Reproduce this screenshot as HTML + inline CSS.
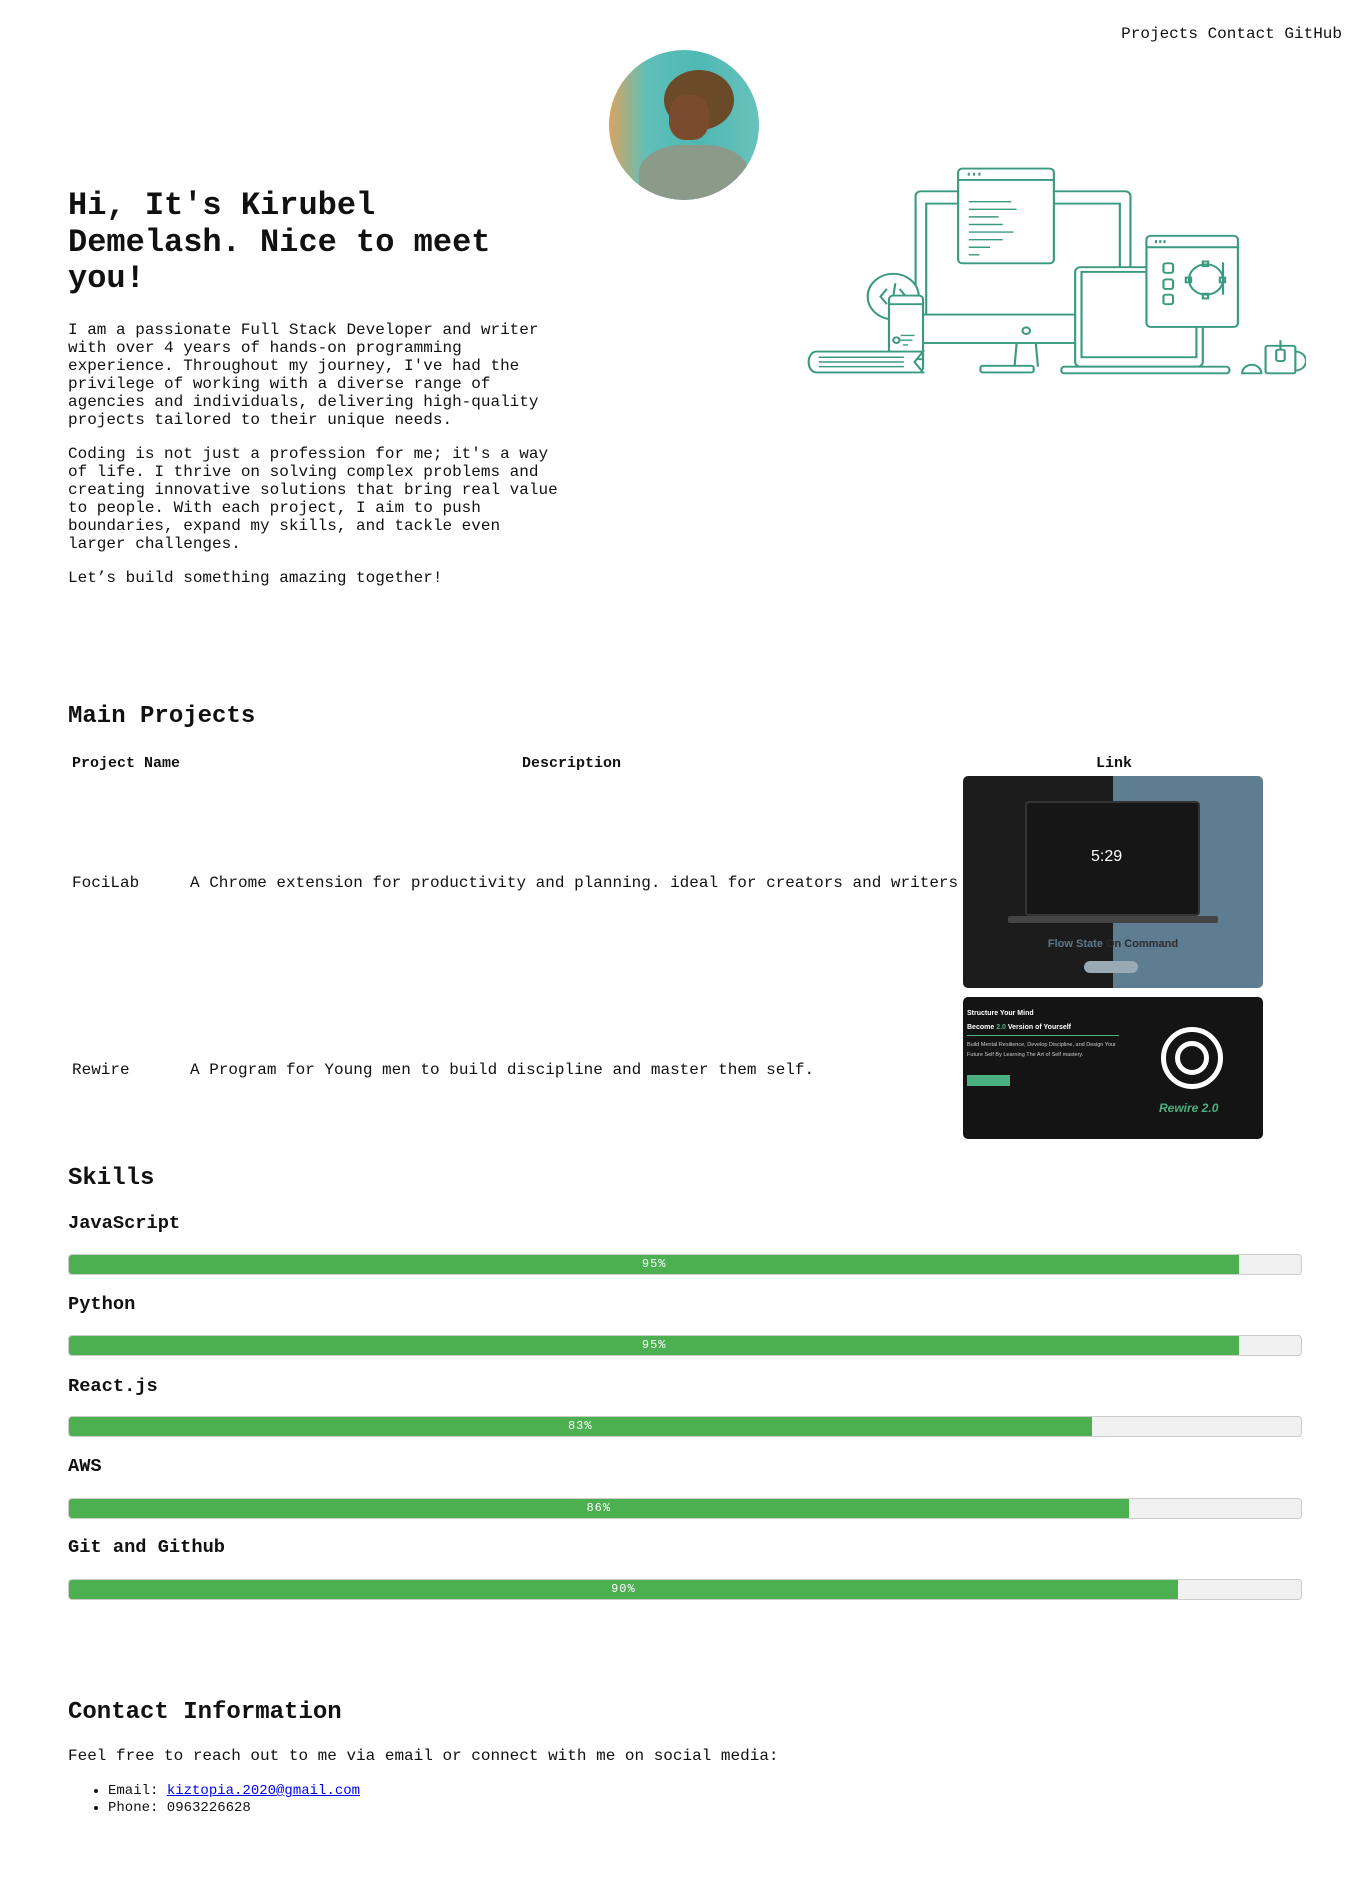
<!DOCTYPE html>
<html><head><meta charset="utf-8"><style>
*{box-sizing:border-box}
body{margin:0;width:1366px;height:1904px;position:relative;font-family:"Liberation Mono","Courier New",monospace;color:#111;background:#fff;overflow:hidden}
.a{position:absolute;margin:0}
p{font-size:16px;line-height:18px;margin:0}
h1{font-size:32px;line-height:36.5px;font-weight:bold}
h2{font-size:24px;font-weight:bold;line-height:28px}
h3{font-size:18.7px;font-weight:bold;line-height:22px}
.bar{position:absolute;left:68px;width:1234px;height:21px;background:#f1f1f1;border:1px solid #ccc;border-radius:4px;overflow:hidden}
.fill{height:100%;background:#4caf50;color:#fff;font-size:12px;line-height:19px;text-align:center;letter-spacing:1px}
.t{font-size:16px;position:absolute;white-space:nowrap}
</style></head><body>
<div class="a t" style="right:24px;top:25px">Projects Contact GitHub</div>

<div class="a" style="left:609px;top:50px;width:150px;height:150px;border-radius:50%;overflow:hidden;background:linear-gradient(90deg,#d9a35e 0%,#5fbfb8 25%,#4fb8b3 60%,#68c2bb 100%)">
<div style="position:absolute;left:55px;top:20px;width:70px;height:60px;border-radius:50%;background:#6b4a2a"></div>
<div style="position:absolute;left:60px;top:45px;width:40px;height:45px;border-radius:40%;background:#7a4b2c"></div>
<div style="position:absolute;left:30px;top:95px;width:110px;height:70px;border-radius:40% 40% 0 0;background:#8c9a8a"></div>
</div>

<h1 class="a" style="left:68px;top:188px;width:495px">Hi, It's Kirubel Demelash. Nice to meet you!</h1>
<div class="a" style="left:68px;top:321px;width:494px">
<p>I am a passionate Full Stack Developer and writer with over 4 years of hands-on programming experience. Throughout my journey, I've had the privilege of working with a diverse range of agencies and individuals, delivering high-quality projects tailored to their unique needs.</p>
<p style="margin-top:16px">Coding is not just a profession for me; it's a way of life. I thrive on solving complex problems and creating innovative solutions that bring real value to people. With each project, I aim to push boundaries, expand my skills, and tackle even larger challenges.</p>
<p style="margin-top:16px">Let’s build something amazing together!</p>
</div>

<svg class="a" style="left:806px;top:160px" width="500" height="220" viewBox="0 0 470 232" preserveAspectRatio="none" fill="none" stroke="#3a9a80" stroke-width="2">
<rect x="103" y="33" width="202" height="155" rx="5"/>
<rect x="113" y="46" width="182" height="126"/>
<rect x="143" y="9" width="90" height="100" rx="4" fill="#fff"/>
<line x1="143" y1="21" x2="233" y2="21"/>
<path d="M152 15h2M157 15h2M162 15h2" stroke-width="3"/>
<path d="M153 44h40M153 52h45M153 60h28M153 68h32M153 76h42M153 84h32M153 92h20M153 100h10" stroke-width="1.5"/>
<rect x="103" y="163" width="202" height="30" fill="#fff"/>
<circle cx="207" cy="180" r="3.5"/>
<path d="M198 193l-2 25M216 193l2 25"/>
<rect x="164" y="217" width="50" height="7" rx="2"/>
<circle cx="82" cy="144" r="24" fill="#fff"/>
<path d="M76 136l-6 8 6 8M88 136l6 8-6 8M84 130l-4 28"/>
<rect x="78" y="143" width="32" height="80" rx="4" fill="#fff"/>
<path d="M78 152h32M78 210h32"/>
<circle cx="85" cy="190" r="3"/>
<path d="M89 185h13M89 190h11M91 195h5" stroke-width="1.5"/>
<circle cx="94" cy="216" r="1.5" fill="#3a9a80"/>
<path d="M110 224H10c-10 0-10-22 0-22h100l-8 11z" fill="#fff"/>
<path d="M12 208h80M12 213h80M12 218h80" stroke-width="1.5"/>
<rect x="253" y="113" width="120" height="105" rx="5" fill="#fff"/>
<rect x="259" y="118" width="108" height="90"/>
<rect x="240" y="218" width="158" height="7" rx="3" fill="#fff"/>
<rect x="320" y="80" width="86" height="96" rx="4" fill="#fff"/>
<line x1="320" y1="92" x2="406" y2="92"/>
<path d="M328 86h2M332 86h2M336 86h2" stroke-width="3"/>
<rect x="336" y="109" width="9" height="10" rx="2"/><rect x="336" y="126" width="9" height="10" rx="2"/><rect x="336" y="142" width="9" height="10" rx="2"/>
<circle cx="376" cy="126" r="16"/>
<path d="M392 108v34"/>
<rect x="373" y="107" width="5" height="5"/><rect x="373" y="141" width="5" height="5"/><rect x="357" y="124" width="5" height="5"/><rect x="389" y="124" width="5" height="5"/>
<path d="M410 225a9 9 0 0 1 18 0z"/>
<rect x="432" y="196" width="28" height="29" rx="2"/>
<path d="M460 202a10 10 0 0 1 0 20"/>
<path d="M446 190v10"/><rect x="442" y="200" width="8" height="12" rx="2"/>
</svg>

<h2 class="a" style="left:68px;top:703px">Main Projects</h2>
<div class="t" style="left:72px;top:755px;font-weight:bold;font-size:15px">Project Name</div>
<div class="t" style="left:522px;top:755px;font-weight:bold;font-size:15px">Description</div>
<div class="t" style="left:1096px;top:755px;font-weight:bold;font-size:15px">Link</div>
<div class="t" style="left:72px;top:874px">FociLab</div>
<div class="t" style="left:190px;top:874px">A Chrome extension for productivity and planning. ideal for creators and writers</div>
<div class="t" style="left:72px;top:1061px">Rewire</div>
<div class="t" style="left:190px;top:1061px">A Program for Young men to build discipline and master them self.</div>

<div class="a" style="left:963px;top:776px;width:300px;height:212px;border-radius:5px;overflow:hidden;background:linear-gradient(90deg,#1c1c1c 50%,#5f7d90 50%)">
<div style="position:absolute;left:62px;top:25px;width:175px;height:115px;background:#161616;border:2px solid #333;border-radius:4px"></div>
<div style="position:absolute;left:45px;top:140px;width:210px;height:7px;background:#444;border-radius:2px"></div>
<div style="position:absolute;left:128px;top:72px;color:#fff;font-family:'Liberation Sans',sans-serif;font-size:16px">5:29</div>
<div style="position:absolute;left:0;width:300px;top:162px;text-align:center;color:#5a7a8c;font-family:'Liberation Sans',sans-serif;font-size:11px;font-weight:bold"><span>Flow State </span><span style="color:#2a2a2a">On Command</span></div>
<div style="position:absolute;left:121px;top:185px;width:54px;height:12px;border-radius:6px;background:#9aaab5"></div>
</div>
<div class="a" style="left:963px;top:997px;width:300px;height:142px;border-radius:5px;overflow:hidden;background:#141414;font-family:'Liberation Sans',sans-serif;color:#fff">
<div style="position:absolute;left:4px;top:13px;font-size:7px;font-weight:bold">Structure Your Mind</div>
<div style="position:absolute;left:4px;top:27px;font-size:7px;font-weight:bold">Become <span style="color:#4caf80">2.0</span> Version of Yourself</div>
<div style="position:absolute;left:4px;top:38px;width:152px;height:1px;background:#4caf80"></div>
<div style="position:absolute;left:4px;top:43px;width:150px;font-size:5.5px;line-height:10px;color:#ccc">Build Mental Resilience, Develop Discipline, and Design Your Future Self By Learning The Art of Self mastery.</div>
<div style="position:absolute;left:4px;top:78px;width:43px;height:11px;background:#4caf80"></div>
<div style="position:absolute;left:198px;top:30px;width:62px;height:62px;border-radius:50%;border:5px solid #fff"></div>
<div style="position:absolute;left:212px;top:44px;width:34px;height:34px;border-radius:50%;border:5px solid #fff"></div>
<div style="position:absolute;left:196px;top:104px;color:#4caf80;font-size:12px;font-style:italic;font-weight:bold">Rewire 2.0</div>
</div>

<h2 class="a" style="left:68px;top:1165px">Skills</h2>
<h3 class="a" style="left:68px;top:1212px">JavaScript</h3>
<div class="bar" style="top:1254px"><div class="fill" style="width:95%">95%</div></div>
<h3 class="a" style="left:68px;top:1293px">Python</h3>
<div class="bar" style="top:1335px"><div class="fill" style="width:95%">95%</div></div>
<h3 class="a" style="left:68px;top:1375px">React.js</h3>
<div class="bar" style="top:1416px"><div class="fill" style="width:83%">83%</div></div>
<h3 class="a" style="left:68px;top:1455px">AWS</h3>
<div class="bar" style="top:1498px"><div class="fill" style="width:86%">86%</div></div>
<h3 class="a" style="left:68px;top:1536px">Git and Github</h3>
<div class="bar" style="top:1579px"><div class="fill" style="width:90%">90%</div></div>

<h2 class="a" style="left:68px;top:1699px">Contact Information</h2>
<p class="a" style="left:68px;top:1747px">Feel free to reach out to me via email or connect with me on social media:</p>
<ul class="a" style="left:68px;top:1783px;padding-left:40px;font-size:14px;line-height:17px">
<li>Email: <a href="#" style="color:#00e">kiztopia.2020@gmail.com</a></li>
<li>Phone: 0963226628</li>
</ul>
</body></html>
